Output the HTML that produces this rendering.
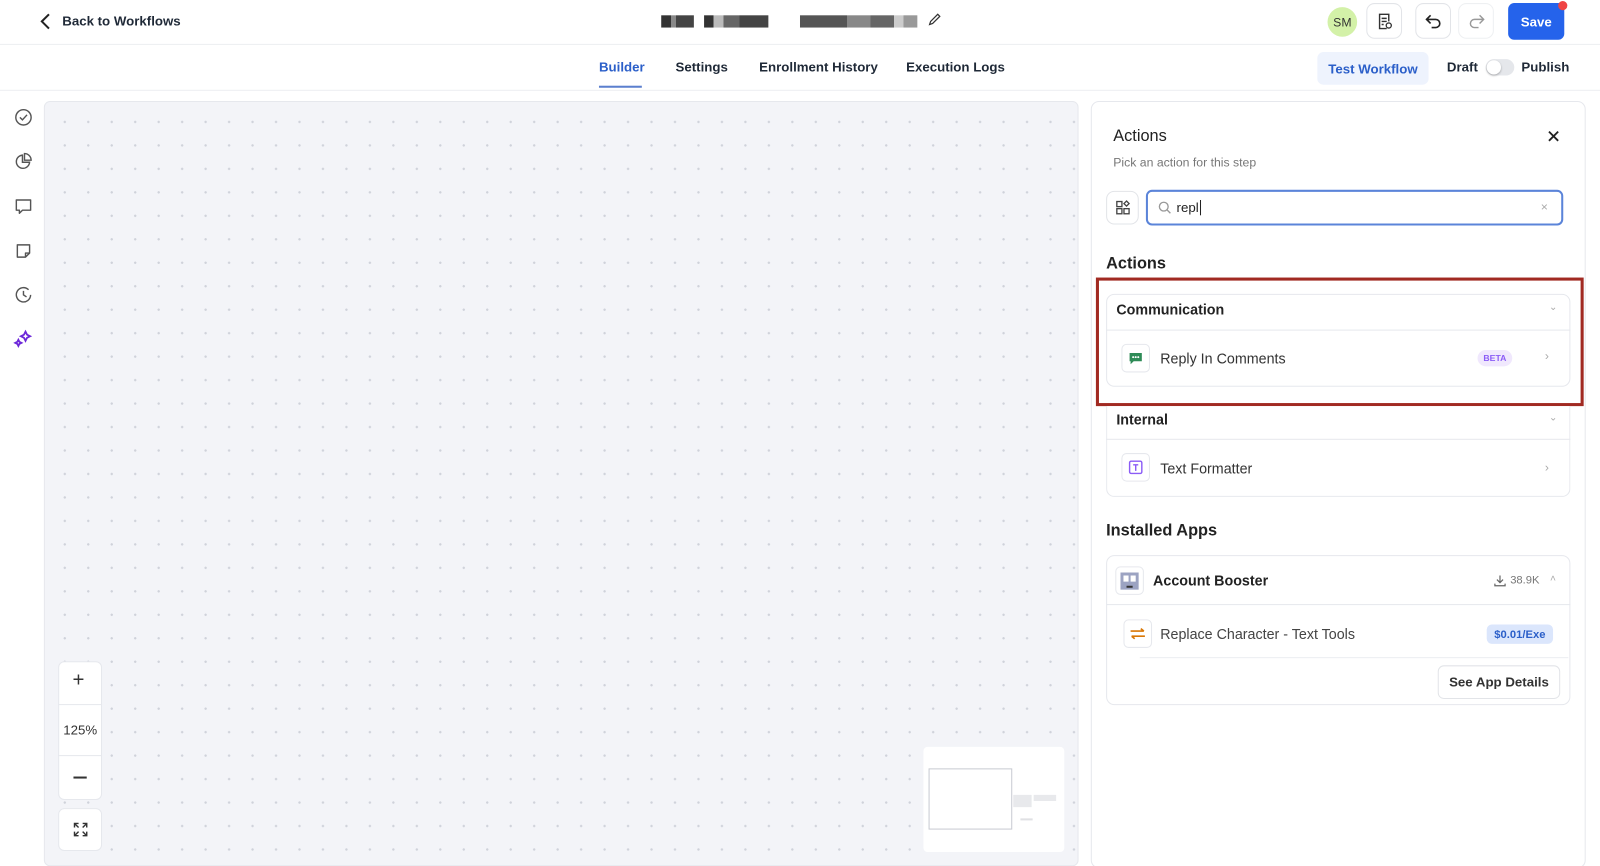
<!DOCTYPE html>
<html><head><meta charset="utf-8"><style>
*{box-sizing:border-box;margin:0;padding:0}
html,body{width:1600px;height:866px;overflow:hidden;background:#fff}
body{font-family:"Liberation Sans",sans-serif;color:#1f2937;position:relative}
#wrap{position:absolute;left:0;top:0;width:1568px;height:849px;transform:scale(1.0204);transform-origin:0 0}
.abs{position:absolute}
.top{left:0;top:0;width:1568px;height:44px;border-bottom:1px solid #eceef1}
.tabs{left:0;top:44px;width:1568px;height:45px;border-bottom:1px solid #eceef1}
.tab{position:absolute;top:58px;font-size:13px;font-weight:bold;color:#1f2937}
.canvas{left:43px;top:99px;width:1014px;height:750px;background-color:#f3f4f8;border-radius:6px;border:1px solid #e6e8ed;
background-image:radial-gradient(circle,#cfd2da 1px,transparent 1.3px);background-size:23px 23px;background-position:8px 8px}
.panel{left:1069px;top:99px;width:485px;height:752px;border:1px solid #e6e8ed;border-radius:8px;background:#fff}
.btn{border:1px solid #e2e4e8;border-radius:8px;background:#fff}
.card{border:1px solid #e6e8ed;border-radius:8px;background:#fff}
.ico{width:28px;height:28px;border:1px solid #e6e8ed;border-radius:5px;background:#fff;display:flex;align-items:center;justify-content:center}
svg{display:block}
</style></head><body><div id="wrap">
<div class="abs top"></div>
<div class="abs" style="left:38px;top:12px"><svg width="14" height="18" viewBox="0 0 14 18"><path d="M10 2 3 9l7 7" fill="none" stroke="#222" stroke-width="2"/></svg></div>
<div class="abs" style="left:61px;top:13px;font-size:13px;font-weight:bold">Back to Workflows</div>
<div class="abs" style="left:648px;top:15px;width:32px;height:12px;background:linear-gradient(90deg,#333 0 30%,#888 30% 45%,#444 45% 100%)"></div>
<div class="abs" style="left:690px;top:15px;width:63px;height:12px;background:linear-gradient(90deg,#333 0 15%,#bbb 15% 30%,#666 30% 55%,#444 55% 100%)"></div>
<div class="abs" style="left:784px;top:15px;width:115px;height:12px;background:linear-gradient(90deg,#555 0 40%,#888 40% 60%,#666 60% 80%,#ccc 80% 88%,#999 88%)"></div>
<div class="abs" style="left:909px;top:12px"><svg width="14" height="14" viewBox="0 0 14 14"><path d="M2 12l1-3 7-7 2 2-7 7z" fill="none" stroke="#333" stroke-width="1.2"/></svg></div>
<div class="abs" style="left:1301px;top:7px;width:29px;height:29px;border-radius:50%;background:#d3f1a8;font-size:12px;display:flex;align-items:center;justify-content:center;color:#333">SM</div>
<div class="abs btn" style="left:1339px;top:3px;width:35px;height:35px;display:flex;align-items:center;justify-content:center"><svg width="16" height="18" viewBox="0 0 16 18"><path d="M10 16H3V2h9v7M5 6h5M5 9h5M5 12h2" fill="none" stroke="#333" stroke-width="1.4"/><circle cx="12" cy="13" r="2.5" fill="none" stroke="#333" stroke-width="1.3"/></svg></div>
<div class="abs btn" style="left:1387px;top:3px;width:35px;height:35px;display:flex;align-items:center;justify-content:center"><svg width="16" height="14" viewBox="0 0 16 14"><path d="M5 1 1 5l4 4M1 5h9a4 4 0 0 1 0 8H6" fill="none" stroke="#222" stroke-width="1.6"/></svg></div>
<div class="abs btn" style="left:1429px;top:3px;width:35px;height:35px;display:flex;align-items:center;justify-content:center;border-color:#eef0f2"><svg width="16" height="14" viewBox="0 0 16 14"><path d="M11 1l4 4-4 4M15 5H6a4 4 0 0 0 0 8h4" fill="none" stroke="#999" stroke-width="1.4"/></svg></div>
<div class="abs" style="left:1478px;top:3px;width:55px;height:36px;border-radius:6px;background:#2563eb;color:#fff;font-size:13px;font-weight:bold;display:flex;align-items:center;justify-content:center">Save</div>
<div class="abs" style="left:1527px;top:1px;width:9px;height:9px;border-radius:50%;background:#ef4444"></div>

<div class="abs tabs"></div>
<div class="tab" style="left:587px;color:#2b5fc9">Builder</div>
<div class="abs" style="left:587px;top:84px;width:42px;height:2px;background:#5b7fce"></div>
<div class="tab" style="left:662px">Settings</div>
<div class="tab" style="left:744px">Enrollment History</div>
<div class="tab" style="left:888px">Execution Logs</div>
<div class="abs" style="left:1291px;top:51px;width:109px;height:32px;border-radius:6px;background:#eef3fd;color:#2b5fc9;font-size:13px;font-weight:bold;display:flex;align-items:center;justify-content:center">Test Workflow</div>
<div class="tab" style="left:1418px">Draft</div>
<div class="abs" style="left:1456px;top:58px;width:28px;height:16px;border-radius:8px;background:#e5e7eb"><div style="position:absolute;left:1px;top:1px;width:14px;height:14px;border-radius:50%;background:#fff;box-shadow:0 1px 2px rgba(0,0,0,.3)"></div></div>
<div class="tab" style="left:1491px">Publish</div>

<div class="abs" style="left:14px;top:106px"><svg width="18" height="18" viewBox="0 0 18 18" fill="none" stroke="#555" stroke-width="1.4"><circle cx="9" cy="9" r="7.5"/><path d="M5.5 9l2.5 2.5 4.5-5"/></svg></div>
<div class="abs" style="left:14px;top:149px"><svg width="18" height="18" viewBox="0 0 18 18" fill="none" stroke="#555" stroke-width="1.4"><path d="M8 3a6.5 6.5 0 1 0 7 7H8z"/><path d="M10 1.5a6.5 6.5 0 0 1 6.5 6.5H10z"/></svg></div>
<div class="abs" style="left:14px;top:193px"><svg width="18" height="18" viewBox="0 0 18 18" fill="none" stroke="#555" stroke-width="1.4"><path d="M2 3h14v10H8l-3 3v-3H2z" stroke-linejoin="round"/></svg></div>
<div class="abs" style="left:14px;top:237px"><svg width="18" height="18" viewBox="0 0 18 18" fill="none" stroke="#555" stroke-width="1.4"><path d="M3 3h12v8l-4 4H3z M11 15v-4h4" stroke-linejoin="round"/></svg></div>
<div class="abs" style="left:14px;top:280px"><svg width="18" height="18" viewBox="0 0 18 18" fill="none" stroke="#555" stroke-width="1.4"><path d="M16 9a7 7 0 1 1-2-5"/><path d="M9 5v4l3 2"/></svg></div>
<div class="abs" style="left:13px;top:323px"><svg width="20" height="18" viewBox="0 0 20 18" fill="none" stroke="#6d28d9" stroke-width="1.8"><path d="M12 2l1.5 3 3 1.5-3 1.5L12 11l-1.5-3-3-1.5 3-1.5z"/><path d="M5 10l1 2 2 1-2 1-1 2-1-2-2-1 2-1z"/></svg></div>

<div class="abs canvas"></div>
<div class="abs card" style="left:57px;top:648px;width:43px;height:136px;border-radius:6px"></div>
<div class="abs" style="left:57px;top:690px;width:43px;height:1px;background:#e6e8ed"></div>
<div class="abs" style="left:57px;top:740px;width:43px;height:1px;background:#e6e8ed"></div>
<div class="abs" style="left:71px;top:656px;font-size:20px;color:#333">+</div>
<div class="abs" style="left:62px;top:708px;font-size:13px;color:#333">125%</div>
<div class="abs" style="left:72px;top:761px;width:13px;height:1.5px;background:#333"></div>
<div class="abs card" style="left:57px;top:792px;width:43px;height:42px;border-radius:6px;display:flex;align-items:center;justify-content:center"><svg width="16" height="16" viewBox="0 0 16 16" fill="none" stroke="#333" stroke-width="1.4"><path d="M2 6V2h4M2 2l4 4M14 6V2h-4M14 2l-4 4M2 10v4h4M2 14l4-4M14 10v4h-4M14 14l-4-4"/></svg></div>
<div class="abs" style="left:905px;top:732px;width:138px;height:103px;background:#fff;border-radius:4px"></div>
<div class="abs" style="left:910px;top:753px;width:82px;height:60px;border:1px solid #c8cbd2"></div>
<div class="abs" style="left:993px;top:779px;width:18px;height:12px;background:#e8e9ec"></div>
<div class="abs" style="left:1013px;top:779px;width:22px;height:6px;background:#e8e9ec"></div>
<div class="abs" style="left:1000px;top:802px;width:12px;height:2px;background:#e0e1e4"></div>

<div class="abs panel"></div>
<div class="abs" style="left:1091px;top:125px;font-size:16px;color:#222">Actions</div>
<div class="abs" style="left:1091px;top:152px;font-size:12px;color:#777">Pick an action for this step</div>
<div class="abs" style="left:1516px;top:127px"><svg width="13" height="13" viewBox="0 0 13 13" stroke="#222" stroke-width="1.8"><path d="M2 2l9 9M11 2l-9 9"/></svg></div>
<div class="abs btn" style="left:1084px;top:187px;width:32px;height:33px;display:flex;align-items:center;justify-content:center"><svg width="15" height="15" viewBox="0 0 15 15" fill="none" stroke="#444" stroke-width="1.3"><rect x="1.5" y="1.5" width="5" height="5"/><rect x="1.5" y="8.5" width="5" height="5"/><rect x="8.5" y="8.5" width="5" height="5"/><path d="M11 1l2.5 2.5L11 6 8.5 3.5z"/></svg></div>
<div class="abs" style="left:1123px;top:186px;width:409px;height:35px;border:2px solid #5b84d9;border-radius:6px"></div>
<div class="abs" style="left:1135px;top:197px"><svg width="13" height="13" viewBox="0 0 13 13" fill="none" stroke="#999" stroke-width="1.3"><circle cx="5.5" cy="5.5" r="4.3"/><path d="M8.7 8.7l3.3 3.3"/></svg></div>
<div class="abs" style="left:1153px;top:196px;font-size:13px;color:#222">repl<span style="border-left:1px solid #222;margin-left:1px"></span></div>
<div class="abs" style="left:1510px;top:196px;font-size:12px;color:#aaa">×</div>

<div class="abs" style="left:1084px;top:250px;font-size:16px;font-weight:bold;color:#222">Actions</div>
<div class="abs card" style="left:1084px;top:288px;width:455px;height:91px"></div>
<div class="abs" style="left:1084px;top:323px;width:455px;height:1px;background:#e6e8ed"></div>
<div class="abs" style="left:1094px;top:295px;font-size:14px;font-weight:bold;color:#222">Communication</div>
<div class="abs" style="left:1518px;top:296px;font-size:10px;color:#aaa">⌄</div>
<div class="abs ico" style="left:1099px;top:337px"><svg width="14" height="13" viewBox="0 0 14 13"><path d="M1 1h12v8H5l-3 3V9H1z" fill="#2e8b57"/><circle cx="4.5" cy="5" r="1" fill="#fff"/><circle cx="7" cy="5" r="1" fill="#fff"/><circle cx="9.5" cy="5" r="1" fill="#fff"/></svg></div>
<div class="abs" style="left:1137px;top:343px;font-size:14px;color:#333">Reply In Comments</div>
<div class="abs" style="left:1448px;top:343px;width:34px;height:16px;border-radius:8px;background:#f0e8fd;color:#8b5cf6;font-size:8.5px;font-weight:bold;display:flex;align-items:center;justify-content:center">BETA</div>
<div class="abs" style="left:1514px;top:342px;font-size:12px;color:#aaa">›</div>
<div class="abs" style="left:1074px;top:272px;width:478px;height:126px;border:3px solid #a12a22"></div>

<div class="abs card" style="left:1084px;top:398px;width:455px;height:89px;border-top:none;border-radius:0 0 8px 8px"></div>
<div class="abs" style="left:1084px;top:430px;width:455px;height:1px;background:#e6e8ed"></div>
<div class="abs" style="left:1094px;top:403px;font-size:14px;font-weight:bold;color:#222">Internal</div>
<div class="abs" style="left:1518px;top:404px;font-size:10px;color:#aaa">⌄</div>
<div class="abs ico" style="left:1099px;top:444px"><svg width="14" height="14" viewBox="0 0 14 14"><rect x="1" y="1" width="12" height="12" rx="1.5" fill="none" stroke="#8b5cf6" stroke-width="1.4"/><path d="M4.5 4.5h5M7 4.5v6" stroke="#8b5cf6" stroke-width="1.4"/></svg></div>
<div class="abs" style="left:1137px;top:451px;font-size:14px;color:#333">Text Formatter</div>
<div class="abs" style="left:1514px;top:451px;font-size:12px;color:#aaa">›</div>

<div class="abs" style="left:1084px;top:512px;font-size:16px;font-weight:bold;color:#222">Installed Apps</div>
<div class="abs card" style="left:1084px;top:544px;width:455px;height:147px"></div>
<div class="abs" style="left:1084px;top:592px;width:455px;height:1px;background:#e6e8ed"></div>
<div class="abs" style="left:1117px;top:644px;width:420px;height:1px;background:#eceef1"></div>
<div class="abs ico" style="left:1093px;top:555px"><svg width="18" height="17" viewBox="0 0 18 17"><rect x="0" y="0" width="18" height="17" fill="#9ca3c2"/><rect x="3" y="3" width="5" height="6" fill="#fff"/><rect x="10" y="3" width="5" height="6" fill="#fff"/><path d="M6 13h6v2H6z" fill="#333"/></svg></div>
<div class="abs" style="left:1130px;top:561px;font-size:14px;font-weight:bold;color:#222">Account Booster</div>
<div class="abs" style="left:1464px;top:563px"><svg width="12" height="12" viewBox="0 0 12 12" fill="none" stroke="#666" stroke-width="1.2"><path d="M6 1v7M3 5l3 3 3-3M1 9v2h10V9"/></svg></div>
<div class="abs" style="left:1480px;top:563px;font-size:11px;color:#777">38.9K</div>
<div class="abs" style="left:1519px;top:562px;font-size:10px;color:#aaa">˄</div>
<div class="abs ico" style="left:1101px;top:607px"><svg width="16" height="12" viewBox="0 0 16 12" fill="none" stroke="#d97706" stroke-width="1.6"><path d="M1 3.5h13M11 1l3 2.5M15 8.5H2M5 11l-3-2.5"/></svg></div>
<div class="abs" style="left:1137px;top:613px;font-size:14px;color:#444">Replace Character - Text Tools</div>
<div class="abs" style="left:1457px;top:612px;width:65px;height:19px;border-radius:5px;background:#dbe6fc;color:#2b5fc9;font-size:11px;font-weight:bold;display:flex;align-items:center;justify-content:center">$0.01/Exe</div>
<div class="abs btn" style="left:1409px;top:652px;width:120px;height:33px;border-radius:6px;font-size:13px;font-weight:bold;color:#333;display:flex;align-items:center;justify-content:center">See App Details</div>
</div></body></html>
